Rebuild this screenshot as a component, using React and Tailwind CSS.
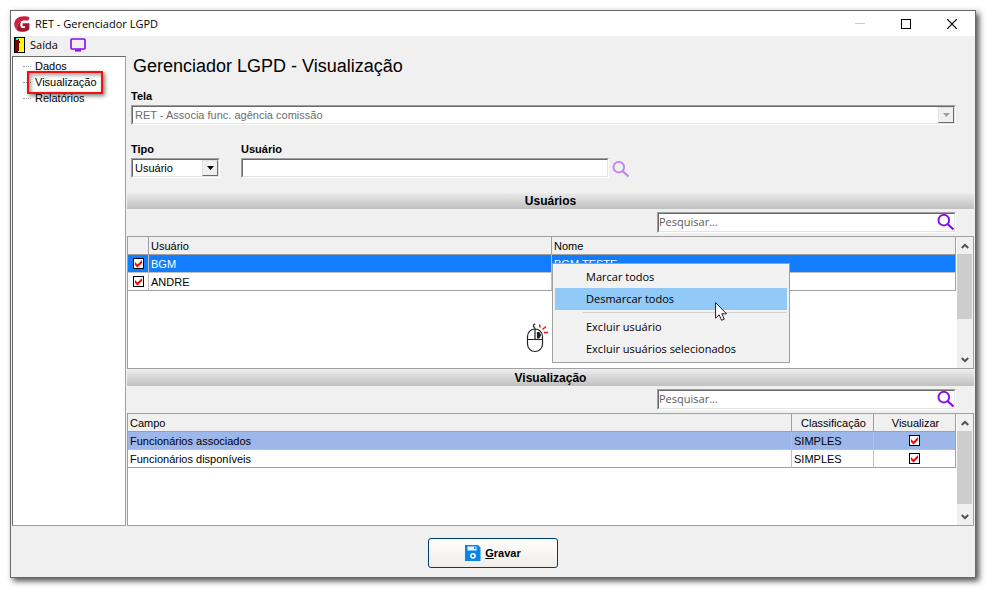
import { useState } from 'react'

const USERS = [
  { login: 'BGM', name: 'BGM TESTE' },
  { login: 'ANDRE', name: '' },
]

const FIELDS = [
  { field: 'Funcionários associados', level: 'SIMPLES' },
  { field: 'Funcionários disponíveis', level: 'SIMPLES' },
]

const sunken = 'border border-t-[#a0a0a0] border-l-[#a0a0a0] border-r-white border-b-white'
const sunkenInner = 'border border-t-[#696969] border-l-[#696969] border-r-[#e3e3e3] border-b-[#e3e3e3]'

function LogoIcon() {
  return (
    <svg viewBox="0 0 16 16" className="w-4 h-4 shrink-0">
      <path d="M15.500 1.300C12 -.3 6 -.3 2.800 2.600C-.6 5.800-.6 10.800 2.800 14.200C2.600 9.500 4.500 6 8.500 4.800C11 4.200 13.500 4.600 14.300 4.800Z" fill="#c8223f" />
      <path d="M2.800 14.200C2.600 9.600 4.200 6.300 7.600 4.900C5.900 7.200 5.800 10.200 7.400 11.500C8.600 12.400 10.300 12.200 11 11.500V10.300H8.600V7.200H15.400V13.200C12.500 16.300 6.500 16.800 2.800 14.200Z" fill="#a01a35" />
    </svg>
  )
}

function DoorIcon() {
  return (
    <svg viewBox="0 0 11 16" className="w-[11px] h-4 shrink-0" shapeRendering="crispEdges">
      <rect width="11" height="16" fill="#000" />
      <rect x="4" y="1" width="6" height="14" fill="#ff0" />
      <path d="M1 1H3L5 3V13L3 15H1Z" fill="#7b0000" />
      <path d="M5 4H6V6H5Z" fill="#000" />
      <rect x="2" y="1" width="2" height="2" fill="#0ff" />
    </svg>
  )
}

function MonitorIcon() {
  return (
    <svg viewBox="0 0 16 14" className="w-4 h-3.5" fill="none">
      <rect x="1" y="1" width="14" height="10" rx="1" stroke="#8a0be0" strokeWidth="1.600" />
      <path d="M5 12.500H11" stroke="#8a0be0" strokeWidth="2" />
    </svg>
  )
}

function SearchIcon({ className }) {
  return (
    <svg viewBox="0 0 17 17" className={`w-[17px] h-[17px] shrink-0 ${className}`} fill="none" stroke="currentColor">
      <circle cx="6.800" cy="6.200" r="5.300" strokeWidth="1.900" />
      <path d="M10.500 10L16.500 15.500" strokeWidth="2.200" />
    </svg>
  )
}

function SaveIcon() {
  return (
    <svg viewBox="0 0 16 16" className="w-4 h-4">
      <path d="M0 0H13L15.500 2.500V16H0Z" fill="#0a84e8" />
      <rect x="2.500" y="1.500" width="9" height="4" fill="#eef6fd" />
      <rect x="9" y="2" width="1.500" height="2" fill="#0a84e8" />
      <circle cx="8" cy="10.800" r="2.100" fill="none" stroke="#fff" strokeWidth="1.500" />
    </svg>
  )
}

function MouseIcon() {
  return (
    <svg viewBox="0 0 22 32" className="absolute left-[398px] top-[86px] w-[22px] h-8" fill="none" stroke="#222" strokeWidth="1.200">
      <path d="M9 6C9.500 4 5 3.500 9 .7" />
      <rect x="1.500" y="6" width="15" height="22.500" rx="7.500" />
      <path d="M1.500 16.500H16.500M9 6V16.500" />
      <path d="M11.500 9.500H13L14.500 12L13 15H11.500Z" fill="#222" />
      <path d="M13.500 1.500L14.200 4.500M20 3.500L16.500 6.500M18 9.500H22" stroke="#f01010" strokeWidth="1.500" />
    </svg>
  )
}

function CursorIcon() {
  return (
    <svg viewBox="0 0 12 20" className="absolute left-[162px] top-[38px] w-3 h-5">
      <path d="M.6 .6V16.200L4.200 12.800L6.600 18.300L9.200 17.100L6.800 11.800H11.500Z" fill="#fff" stroke="#1a1a2e" strokeWidth="1" />
    </svg>
  )
}

function Check({ label }) {
  const [on, setOn] = useState(true)
  return (
    <span className="grid w-[11px] h-[11px] mx-auto">
      <input
        type="checkbox"
        aria-label={label}
        checked={on}
        onChange={() => setOn(!on)}
        className="appearance-none col-start-1 row-start-1 w-[11px] h-[11px] border border-black bg-white"
      />
      {on && (
        <svg viewBox="0 0 11 11" className="col-start-1 row-start-1 w-[11px] h-[11px] pointer-events-none">
          <path d="M2 4L4.500 6.500L9 2V5L4.500 9.500L2 7Z" fill="#f00" />
        </svg>
      )}
    </span>
  )
}

function Select({ id, value, disabled }) {
  return (
    <div className={sunken}>
      <div className={`flex h-[18px] bg-white ${sunkenInner}`}>
        <select
          id={id}
          disabled={disabled}
          className={`appearance-none flex-1 min-w-0 pl-0.5 outline-none ${disabled ? 'text-[#6d6d6d]' : 'text-black'}`}
        >
          <option>{value}</option>
        </select>
        <span className="flex items-center justify-center w-4 bg-[#f0f0f0] border border-t-[#e3e3e3] border-l-[#e3e3e3] border-r-[#696969] border-b-[#696969]">
          <svg viewBox="0 0 7 4" className={`w-[7px] h-1 ${disabled ? 'text-[#a0a0a0]' : 'text-black'}`} fill="currentColor">
            <path d="M0 0H7L3.500 4Z" />
          </svg>
        </span>
      </div>
    </div>
  )
}

function SectionTitle({ children }) {
  return (
    <h2 className="h-4 bg-linear-to-b from-[#ebebeb] to-[#c0c0c0] text-center text-xs leading-4 font-bold">{children}</h2>
  )
}

function SearchBox({ label }) {
  return (
    <div className="flex justify-end py-[3px] pr-[18px]">
      <div className={`w-[299px] ${sunken}`}>
        <div className={`flex items-start h-[19px] bg-white ${sunkenInner}`}>
          <input
            type="text"
            aria-label={label}
            placeholder="Pesquisar..."
            className="flex-1 min-w-0 h-4 outline-none font-['Open_Sans',sans-serif] text-[11px] placeholder:text-[#5a5a5a]"
          />
          <SearchIcon className="text-[#8a0be0]" />
        </div>
      </div>
    </div>
  )
}

function Chevron({ down }) {
  return (
    <svg viewBox="0 0 8 6" className="w-2 h-1.5" fill="none" stroke="#505050" strokeWidth="2">
      <path d={down ? 'M.8 1L4 4.200L7.200 1' : 'M.8 5L4 1.800L7.200 5'} />
    </svg>
  )
}

function ScrollBar({ thumb }) {
  return (
    <div className="flex flex-col w-4 shrink-0 ml-px bg-[#f0f0f0]">
      <button aria-label="Rolar para cima" className="flex h-[17px] items-center justify-center"><Chevron /></button>
      <div className={`mr-px bg-[#cdcdcd] ${thumb}`} />
      <button aria-label="Rolar para baixo" className="flex h-[17px] mt-auto items-center justify-center"><Chevron down /></button>
    </div>
  )
}

const th = 'h-[18px] p-0 pl-0.5 font-normal bg-[#f0f0f0] border-r border-b border-[#a0a0a0]'
const cell = 'h-[18px] p-0 border-r border-b border-[#c0c0c0] last:border-r-[#a0a0a0] [tr:last-child>&]:border-b-[#a0a0a0]'
const td = `${cell} pl-0.5`

function ContextMenu() {
  const item = 'block w-full h-[22px] pl-[31px] text-left hover:bg-[#91c9f7]'
  return (
    <div role="menu" className="absolute left-[424px] top-[26px] w-[238px] p-0.5 border border-[#a0a0a0] bg-[#f2f2f2] font-['Open_Sans',sans-serif] text-[11px] leading-[22px]">
      <button role="menuitem" className={item}>Marcar todos</button>
      <button role="menuitem" className={`${item} bg-[#91c9f7]`}>Desmarcar todos</button>
      <div className="h-px mt-0.5 mb-[3px] ml-7 bg-[#d0d0d0]" />
      <button role="menuitem" className={item}>Excluir usuário</button>
      <button role="menuitem" className={item}>Excluir usuários selecionados</button>
      <CursorIcon />
    </div>
  )
}

function TitleBar() {
  return (
    <header className="flex items-center h-[25px] pl-[3px] pr-[18px] bg-white font-['Open_Sans',sans-serif] text-[11px]">
      <LogoIcon />
      <span className="ml-[5px]">RET - Gerenciador LGPD</span>
      <div className="flex items-center gap-9 ml-auto">
        <button aria-label="Minimizar" disabled>
          <svg viewBox="0 0 10 10" className="w-2.5 h-2.5" shapeRendering="crispEdges"><path d="M0 4.500H10" stroke="#ccc" /></svg>
        </button>
        <button aria-label="Maximizar">
          <svg viewBox="0 0 10 10" className="w-2.5 h-2.5" fill="none" stroke="#000" shapeRendering="crispEdges"><path d="M.5 .5H9.500V9.500H.5Z" /></svg>
        </button>
        <button aria-label="Fechar">
          <svg viewBox="0 0 10 10" className="w-2.5 h-2.5" stroke="#000" strokeWidth="1.200"><path d="M0 0L10 10M10 0L0 10" /></svg>
        </button>
      </div>
    </header>
  )
}

function Tree() {
  return (
    <nav className="w-[114px] shrink-0 mr-px pt-px bg-white border border-[#a0a0a0] border-t-[#696969] border-l-[#696969]">
      <ul className="ml-2.5 leading-4">
        {['Dados', 'Visualização', 'Relatórios'].map(item => (
          <li key={item} className="relative flex items-center">
            <span className="w-2 mr-1 border-t border-dotted border-[#a0a0a0]" />
            <a href="#">{item}</a>
            {item === 'Visualização' && (
              <span className="absolute left-1 -top-[3px] w-[76px] h-[23px] border-2 border-[#f01010] shadow-[2px_2px_4px_rgba(0,0,0,0.5),inset_2px_2px_4px_rgba(0,0,0,0.4)] pointer-events-none" />
            )}
          </li>
        ))}
      </ul>
    </nav>
  )
}

export default function App() {
  return (
    <div className="flex min-h-screen p-2.5 pr-[11px] pb-[11px] bg-white font-['Liberation_Sans',Arial,sans-serif] text-[11px] leading-4 text-black">
      <div className="flex flex-col flex-1 min-w-0 bg-[#f0f0f0] border border-[#696969] shadow-[3px_3px_6px_rgba(0,0,0,0.7)]">
        <TitleBar />

        <div className="flex items-center h-5 pl-[3px] pb-0.5 font-['Open_Sans',sans-serif] text-[11px]">
          <button className="flex items-center gap-[5px]">
            <DoorIcon />
            Saída
          </button>
          <button aria-label="Monitor" className="ml-3"><MonitorIcon /></button>
        </div>

        <div className="flex flex-1 pl-px pr-px">
          <Tree />

          <main className="flex flex-col flex-1 min-w-0">
            <div className="pl-1 pr-[18px]">
              <h1 className="pl-0.5 text-lg leading-5">Gerenciador LGPD - Visualização</h1>
              <label htmlFor="tela" className="block mt-3 font-bold">Tela</label>
              <div className="mt-px"><Select id="tela" value="RET - Associa func. agência comissão" disabled /></div>

              <div className="flex gap-[21px] mt-4">
                <div className="w-[89px]">
                  <label htmlFor="tipo" className="block font-bold">Tipo</label>
                  <div className="mt-px"><Select id="tipo" value="Usuário" /></div>
                </div>
                <div className="w-[368px]">
                  <label htmlFor="usuario" className="block font-bold">Usuário</label>
                  <div className={`mt-px ${sunken}`}>
                    <input id="usuario" type="text" className={`block w-full h-[18px] bg-white outline-none ${sunkenInner}`} />
                  </div>
                </div>
                <button aria-label="Buscar usuário" className="self-end -ml-[18px]"><SearchIcon className="text-[#c583f0]" /></button>
              </div>
            </div>

            <div className="mt-[15px]"><SectionTitle>Usuários</SectionTitle></div>
            <SearchBox label="Pesquisar usuários" />
            <div className="relative flex h-[133px] bg-white border border-[#a0a0a0]">
              <div className="flex-1 min-w-0">
                <table className="w-full table-fixed border-separate border-spacing-0 text-left">
                  <thead>
                    <tr>
                      <th className={`${th} w-[21px]`} aria-label="Marcado" />
                      <th className={`${th} w-[403px]`}>Usuário</th>
                      <th className={th}>Nome</th>
                    </tr>
                  </thead>
                  <tbody>
                    {USERS.map((u, i) => (
                      <tr key={u.login} className={i === 0 ? 'bg-[#127eff] text-white' : ''}>
                        <td className={cell}><Check label={`Marcar ${u.login}`} /></td>
                        <td className={td}>{u.login}</td>
                        <td className={td}>{u.name}</td>
                      </tr>
                    ))}
                  </tbody>
                </table>
              </div>
              <ScrollBar thumb="h-[65px]" />
              <MouseIcon />
              <ContextMenu />
            </div>

            <div className="mt-px"><SectionTitle>Visualização</SectionTitle></div>
            <SearchBox label="Pesquisar campos" />
            <div className="flex flex-1 min-h-[113px] bg-white border border-[#a0a0a0]">
              <div className="flex-1 min-w-0">
                <table className="w-full table-fixed border-separate border-spacing-0 text-left">
                  <thead>
                    <tr>
                      <th className={th}>Campo</th>
                      <th className={`${th} w-[82px] text-center`}>Classificação</th>
                      <th className={`${th} w-[82px] text-center`}>Visualizar</th>
                    </tr>
                  </thead>
                  <tbody>
                    {FIELDS.map((f, i) => (
                      <tr key={f.field} className={i === 0 ? 'bg-[#9db7ea]' : ''}>
                        <td className={td}>{f.field}</td>
                        <td className={td}>{f.level}</td>
                        <td className={cell}><Check label={`Visualizar ${f.field}`} /></td>
                      </tr>
                    ))}
                  </tbody>
                </table>
              </div>
              <ScrollBar thumb="h-[73px]" />
            </div>
          </main>
        </div>

        <footer className="flex justify-center pt-3 pb-[9px]">
          <button className="flex items-center justify-center gap-1 w-[130px] h-[30px] rounded-[3px] border border-[#003c74] bg-linear-to-b from-white to-[#f0ede9] font-bold">
            <SaveIcon />
            <span><u>G</u>ravar</span>
          </button>
        </footer>
      </div>
    </div>
  )
}
